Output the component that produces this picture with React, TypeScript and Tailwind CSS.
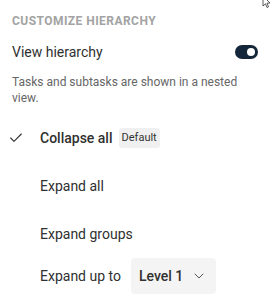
import { Check, ChevronDown } from "lucide-react";

const options = [
  { label: "Collapse all", active: true, badge: "Default" },
  { label: "Expand all" },
  { label: "Expand groups" },
];

export default function App() {
  return (
    <div className="relative h-[305px] w-[271px] overflow-hidden bg-white font-['Roboto',sans-serif] text-[#303030]">
      {/* mouse cursor peeking in at the corner */}
      <svg
        className="absolute right-0 top-0"
        width="10"
        height="8"
        viewBox="0 0 10 8"
      >
        <path d="M2 -4 L2 6 L4.5 3.8 L6 7.5 L7.5 6.8 L6 3.2 L9 3 Z" fill="white" stroke="#333" strokeWidth="0.8" />
      </svg>

      <div className="px-3 pt-[13px]">
        <h2 className="text-[12px] font-bold leading-4 tracking-[0.45px] text-[#a3a3a3]">
          CUSTOMIZE HIERARCHY
        </h2>

        <div className="mt-[13px] flex h-5 items-center justify-between">
          <span className="text-[14px] leading-5">View hierarchy</span>
          <div className="mr-[1px] flex h-[14px] w-[23px] items-center justify-end rounded-full bg-[#13263a] pr-[3px]">
            <div className="h-[8px] w-[8px] rounded-full bg-white" />
          </div>
        </div>

        <p className="mt-3 text-[12px] leading-4 text-[#666]">
          Tasks and subtasks are shown in a nested view.
        </p>

        <div className="mt-2 flex flex-col">
          {options.map((o) => (
            <div key={o.label} className="flex h-12 items-center">
              <div className="flex w-7 items-center">
                {o.active && (
                  <Check className="-ml-1 h-4 w-4 text-[#303030]" strokeWidth={1.6} />
                )}
              </div>
              <span
                className={
                  o.active
                    ? "text-[14px] font-medium leading-5"
                    : "text-[14px] leading-5"
                }
              >
                {o.label}
              </span>
              {o.badge && (
                <span className="ml-[6px] rounded-[3px] bg-[#f0f0f0] px-[3px] text-[11px] leading-5 text-[#333]">
                  {o.badge}
                </span>
              )}
            </div>
          ))}
          <div className="flex h-9 items-center pl-7">
            <span className="text-[14px] leading-5">Expand up to</span>
            <button className="ml-[10px] flex h-9 w-[85px] items-center rounded-[4px] bg-[#f4f4f4] pl-2">
              <span className="text-[14px] font-medium leading-5">Level 1</span>
              <ChevronDown className="ml-2 h-4 w-4 text-[#555]" strokeWidth={1.5} />
            </button>
          </div>
        </div>
      </div>
    </div>
  );
}
